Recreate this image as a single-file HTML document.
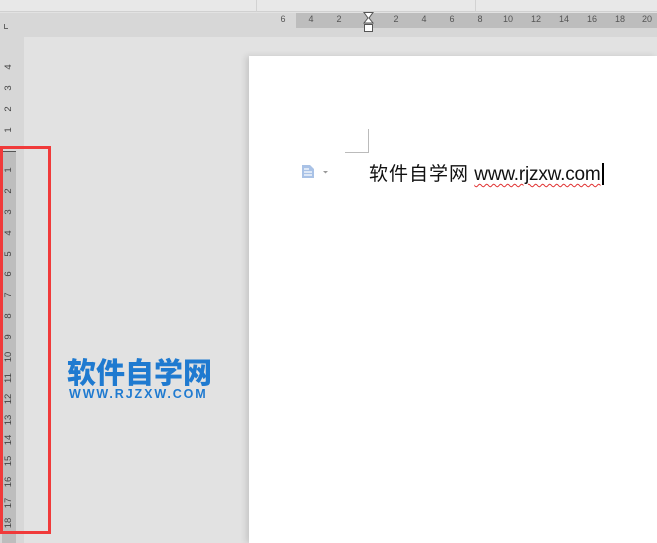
<!DOCTYPE html>
<html><head><meta charset="utf-8"><style>
*{margin:0;padding:0;box-sizing:border-box}
body{width:657px;height:543px;overflow:hidden;background:#e2e2e2;position:relative;font-family:"Liberation Sans",sans-serif}
.a{position:absolute}
.hn{position:absolute;top:14px;font-size:9px;color:#555;width:20px;text-align:center;margin-left:-10px}
.vn{position:absolute;left:3px;font-size:9.5px;color:#444;transform:rotate(-90deg);width:12px;text-align:center;height:10px;line-height:10px}
</style></head><body>
<div class="a" style="left:0;top:0;width:657px;height:12px;background:#e8e8e8;border-bottom:1px solid #d0d0d0"></div>
<div class="a" style="left:256px;top:0;width:1px;height:12px;background:#d2d2d2"></div>
<div class="a" style="left:475px;top:0;width:1px;height:12px;background:#d2d2d2"></div>
<div class="a" style="left:0;top:13px;width:657px;height:24px;background:#d7d7d7"></div>
<div class="a" style="left:296px;top:13px;width:361px;height:15px;background:#bdbdbd"></div>
<div class="a" style="left:4px;top:24px;width:4px;height:5px;border-left:1px solid #666;border-bottom:1px solid #666"></div>
<div class="hn" style="left:283px">6</div><div class="hn" style="left:311px">4</div><div class="hn" style="left:339px">2</div>
<div class="hn" style="left:396px">2</div><div class="hn" style="left:424px">4</div><div class="hn" style="left:452px">6</div><div class="hn" style="left:480px">8</div><div class="hn" style="left:508px">10</div><div class="hn" style="left:536px">12</div><div class="hn" style="left:564px">14</div><div class="hn" style="left:592px">16</div><div class="hn" style="left:620px">18</div><div class="hn" style="left:647px">20</div>
<svg class="a" style="left:363px;top:12px" width="12" height="22"><path d="M1 0.5H10L6 6L10 11H1L5 6Z" fill="#fff" stroke="#555"/><rect x="1.5" y="12.5" width="8" height="7" fill="#fff" stroke="#555"/></svg>
<div class="a" style="left:0;top:37px;width:24px;height:506px;background:#d7d7d7"></div>
<div class="a" style="left:2px;top:151px;width:14px;height:392px;background:#bdbdbd;border-top:1px solid #555"></div>
<div class="vn" style="top:62px">4</div><div class="vn" style="top:83px">3</div><div class="vn" style="top:104px">2</div><div class="vn" style="top:125px">1</div>
<div class="vn" style="top:165px">1</div><div class="vn" style="top:186px">2</div><div class="vn" style="top:207px">3</div><div class="vn" style="top:228px">4</div><div class="vn" style="top:249px">5</div><div class="vn" style="top:269px">6</div><div class="vn" style="top:290px">7</div><div class="vn" style="top:311px">8</div><div class="vn" style="top:332px">9</div><div class="vn" style="top:352px">10</div><div class="vn" style="top:373px">11</div><div class="vn" style="top:394px">12</div><div class="vn" style="top:415px">13</div><div class="vn" style="top:435px">14</div><div class="vn" style="top:456px">15</div><div class="vn" style="top:477px">16</div><div class="vn" style="top:498px">17</div><div class="vn" style="top:518px">18</div>
<div class="a" style="left:0;top:146px;width:51px;height:388px;border:3px solid #f03a3a"></div>
<div class="a" style="left:67px;top:355px;font-family:'Noto Sans CJK SC',sans-serif;font-weight:900;font-size:29px;line-height:32px;color:#1f7ad0;white-space:nowrap">软件自学网</div>
<div class="a" style="left:69px;top:387px;font-weight:bold;font-size:12.5px;color:#1f7ad0;letter-spacing:1.9px;white-space:nowrap">WWW.RJZXW.COM</div>
<div class="a" style="left:249px;top:56px;width:408px;height:487px;background:#fff;box-shadow:-3px 0 6px rgba(0,0,0,0.12)"></div>
<div class="a" style="left:345px;top:129px;width:24px;height:24px;border-right:1px solid #bbb;border-bottom:1px solid #bbb"></div>
<svg class="a" style="left:301px;top:164px" width="28" height="16"><path d="M1 1H9L13 5V14H1Z" fill="#a9c2e6"/><path d="M3 5H8M3 8H11M3 11H11" stroke="#fff" stroke-width="1.2"/><path d="M22 7H27L24.5 9.5Z" fill="#999"/></svg>
<div class="a" style="left:369px;top:163px;font-family:'Liberation Sans','Noto Sans CJK SC',sans-serif;font-size:19px;line-height:24px;color:#111;white-space:nowrap"><span style="letter-spacing:1px">软件自学网</span> <span style="letter-spacing:-0.2px;text-decoration:underline wavy #e03030;text-decoration-thickness:1px;text-underline-offset:3px">www.rjzxw.com</span></div>
<div class="a" style="left:602px;top:163px;width:2px;height:22px;background:#000"></div>
</body></html>
